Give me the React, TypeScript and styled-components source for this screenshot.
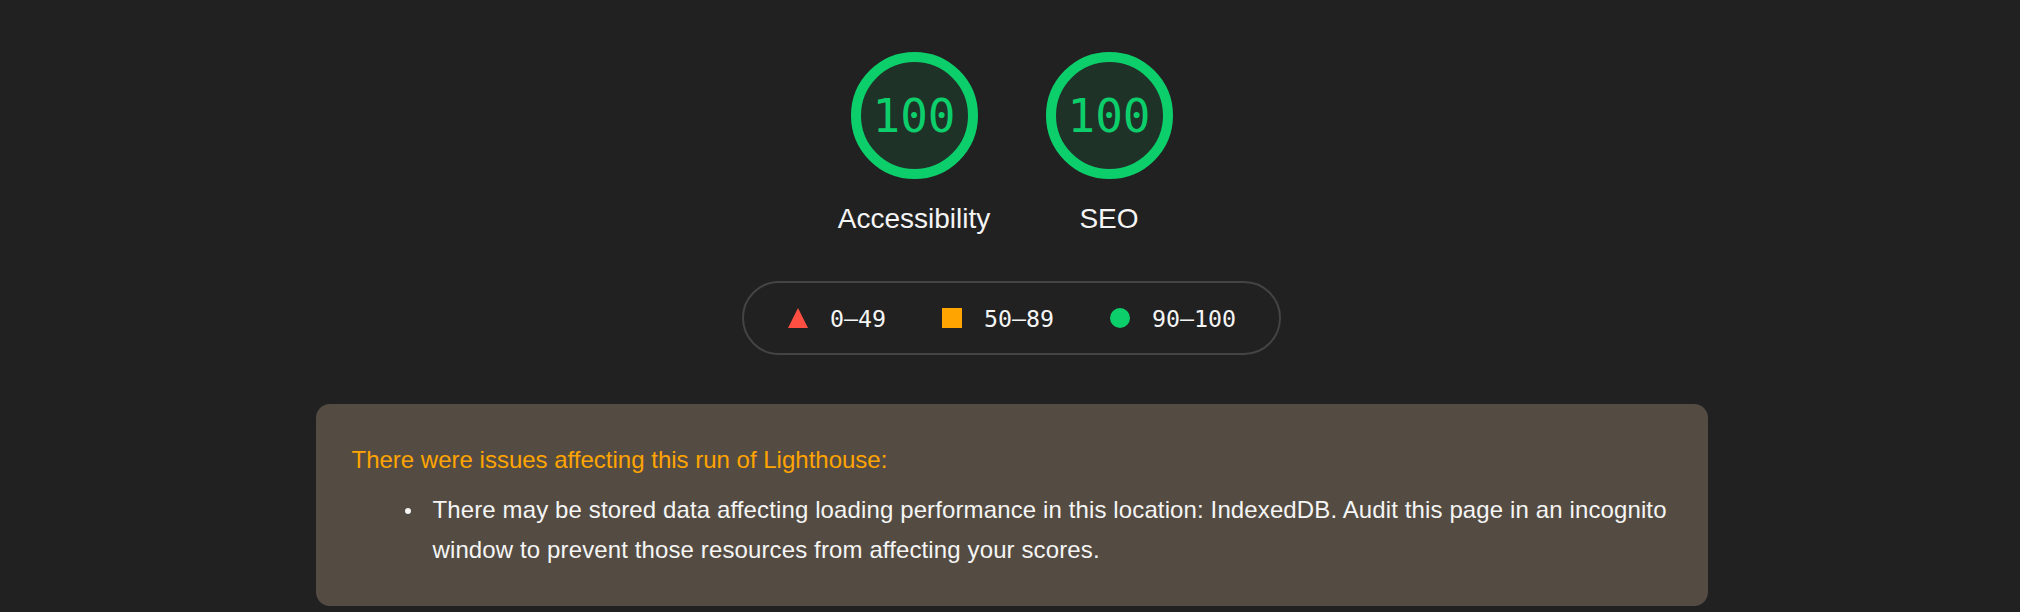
import styled, { createGlobalStyle } from "styled-components";

const GlobalStyle = createGlobalStyle`
  html, body {
    margin: 0;
    background: #212121;
  }
  body {
    font-family: "Liberation Sans", Arial, Helvetica, sans-serif;
    color: #f5f5f5;
  }
`;

const GAUGES = [
  { label: "Accessibility", score: 100 },
  { label: "SEO", score: 100 },
];

const RANGES: { shape: "triangle" | "square" | "circle"; text: string }[] = [
  { shape: "triangle", text: "0–49" },
  { shape: "square", text: "50–89" },
  { shape: "circle", text: "90–100" },
];

const App = () => {
  return (
    <Page>
      <GlobalStyle />
      <Gauges>
        {GAUGES.map((g) => (
          <GaugeWrap key={g.label}>
            <Ring>{g.score}</Ring>
            <GaugeLabel>{g.label}</GaugeLabel>
          </GaugeWrap>
        ))}
      </Gauges>

      <Legend>
        {RANGES.map((r) => (
          <Range key={r.text}>
            <Marker $shape={r.shape} />
            <span>{r.text}</span>
          </Range>
        ))}
      </Legend>

      <Warnings>
        <WarningTitle>There were issues affecting this run of Lighthouse:</WarningTitle>
        <WarningList>
          <li>
            There may be stored data affecting loading performance in this location: IndexedDB.
            Audit this page in an incognito window to prevent those resources from affecting your
            scores.
          </li>
        </WarningList>
      </Warnings>
    </Page>
  );
};

const Page = styled.div`
  min-height: 612px;
  box-sizing: border-box;
  padding: 52px 0 0 3px;
  display: flex;
  flex-direction: column;
  align-items: center;
`;

const Gauges = styled.div`
  display: flex;
  gap: 35px;
`;

const GaugeWrap = styled.div`
  width: 160px;
  display: flex;
  flex-direction: column;
  align-items: center;
`;

const Ring = styled.div`
  width: 127px;
  height: 127px;
  box-sizing: border-box;
  border-radius: 50%;
  border: 10px solid #0cce6b;
  background: #1f3228;
  display: flex;
  align-items: center;
  justify-content: center;
  font-family: "DejaVu Sans Mono", "Liberation Mono", monospace;
  font-size: 46px;
  color: #0cce6b;
`;

const GaugeLabel = styled.div`
  margin-top: 24px;
  font-size: 28px;
  line-height: 32px;
  color: #f5f5f5;
  white-space: nowrap;
`;

const Legend = styled.div`
  margin-top: 46px;
  height: 74px;
  box-sizing: border-box;
  border: 2px solid #444;
  border-radius: 37px;
  padding: 0 43px 0 44px;
  display: flex;
  align-items: center;
  gap: 56px;
`;

const Range = styled.div`
  display: flex;
  align-items: center;
  gap: 22px;
  font-family: "DejaVu Sans Mono", "Liberation Mono", monospace;
  font-size: 23.25px;
  color: #f5f5f5;
`;

const Marker = styled.span<{ $shape: "triangle" | "square" | "circle" }>`
  width: 20px;
  height: 20px;
  flex-shrink: 0;
  background: ${(p) =>
    p.$shape === "triangle" ? "#ff4e42" : p.$shape === "square" ? "#ffa400" : "#0cce6b"};
  border-radius: ${(p) => (p.$shape === "circle" ? "50%" : "0")};
  clip-path: ${(p) => (p.$shape === "triangle" ? "polygon(50% 0, 100% 100%, 0 100%)" : "none")};
`;

const Warnings = styled.div`
  margin-top: 49px;
  width: 1392px;
  box-sizing: border-box;
  padding: 36px;
  border-radius: 14px;
  background: #544c42;
  font-size: 24px;
  line-height: 40px;
`;

const WarningTitle = styled.div`
  color: #ffa400;
`;

const WarningList = styled.ul`
  margin: 10px 0 0;
  padding: 0 0 0 53px;
  list-style: none;

  li {
    display: flex;
    color: #f5f5f5;
    letter-spacing: 0.12px;
  }

  li::before {
    content: "";
    flex-shrink: 0;
    width: 6px;
    height: 6px;
    margin: 18px 22px 0 0;
    border-radius: 50%;
    background: #f5f5f5;
  }
`;

export default App;
